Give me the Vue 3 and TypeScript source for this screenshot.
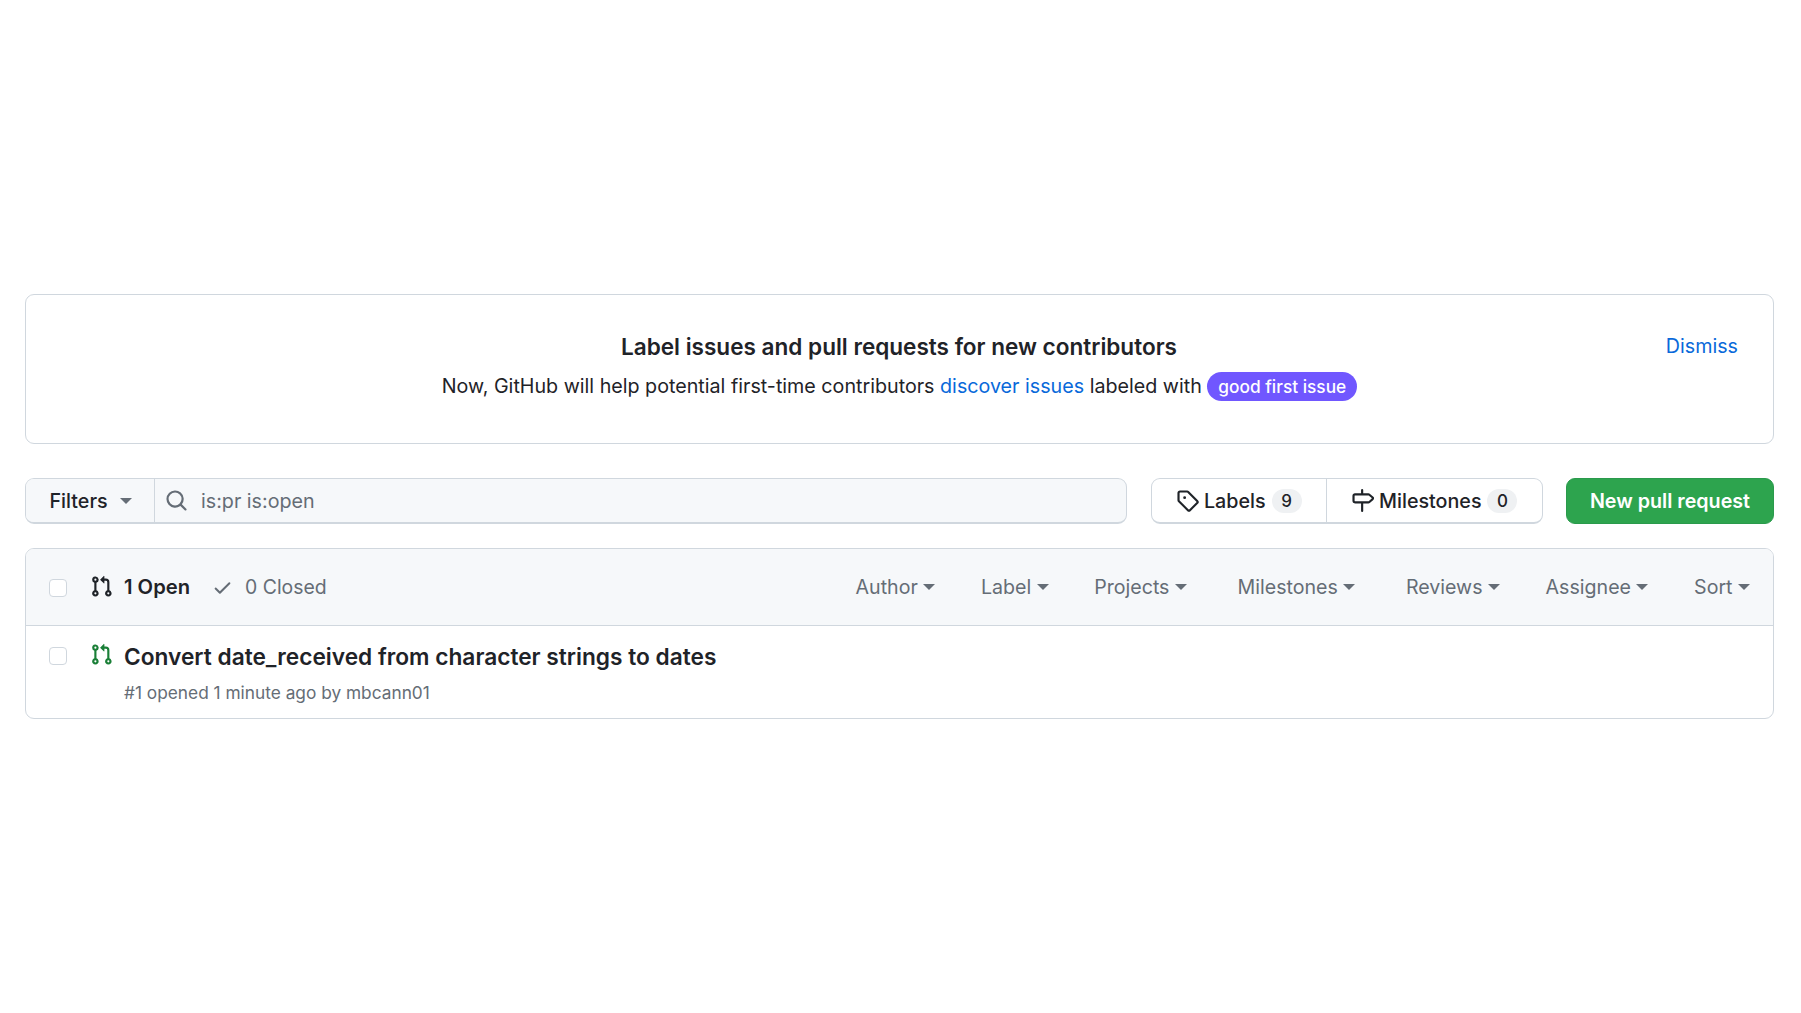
<script setup lang="ts">
const filters: string[] = ['Author', 'Label', 'Projects', 'Milestones', 'Reviews', 'Assignee', 'Sort']
const prPath =
  'M1.5 3.25a2.25 2.25 0 1 1 3 2.122v5.256a2.251 2.251 0 1 1-1.5 0V5.372A2.25 2.25 0 0 1 1.5 3.25Zm5.677-.177L9.573.677A.25.25 0 0 1 10 .854V2.5h1A2.5 2.5 0 0 1 13.5 5v5.628a2.251 2.251 0 1 1-1.5 0V5a1 1 0 0 0-1-1h-1v1.646a.25.25 0 0 1-.427.177L7.177 3.427a.25.25 0 0 1 0-.354ZM3.75 2.5a.75.75 0 1 0 0 1.5.75.75 0 0 0 0-1.5Zm0 9.5a.75.75 0 1 0 0 1.5.75.75 0 0 0 0-1.5Zm8.25.75a.75.75 0 1 0 1.5 0 .75.75 0 0 0-1.5 0Z'
</script>

<template>
  <div class="page">
    <section class="banner">
      <a class="dismiss">Dismiss</a>
      <h3 class="banner-title">Label issues and pull requests for new contributors</h3>
      <p class="banner-text">
        Now, GitHub will help potential first-time contributors
        <a class="link">discover issues</a> labeled with
        <span class="pill">good first issue</span>
      </p>
    </section>

    <div class="toolbar">
      <div class="search-group">
        <button class="filters">Filters<i class="caret caret-dark"></i></button>
        <div class="search">
          <svg class="icon search-icon" viewBox="0 0 16 16"><path d="M10.68 11.74a6 6 0 0 1-7.922-8.982 6 6 0 0 1 8.982 7.922l3.04 3.04a.749.749 0 0 1-.326 1.275.749.749 0 0 1-.734-.215ZM11.5 7a4.499 4.499 0 1 0-8.997 0A4.499 4.499 0 0 0 11.5 7Z" /></svg>
          <span>is:pr is:open</span>
        </div>
      </div>
      <div class="nav-group">
        <a class="nav-item nav-labels">
          <svg class="icon" viewBox="0 0 16 16"><path d="M1 7.775V2.75C1 1.784 1.784 1 2.75 1h5.025c.464 0 .91.184 1.238.513l6.25 6.25a1.75 1.75 0 0 1 0 2.474l-5.026 5.026a1.75 1.75 0 0 1-2.474 0l-6.25-6.25A1.752 1.752 0 0 1 1 7.775Zm1.5 0c0 .066.026.13.073.177l6.25 6.25a.25.25 0 0 0 .354 0l5.025-5.025a.25.25 0 0 0 0-.354l-6.25-6.25a.25.25 0 0 0-.177-.073H2.75a.25.25 0 0 0-.25.25ZM6 5a1 1 0 1 1 0 2 1 1 0 0 1 0-2Z" /></svg>
          <span>Labels</span><span class="counter">9</span>
        </a>
        <a class="nav-item">
          <svg class="icon" viewBox="0 0 16 16"><path d="M7.75 0a.75.75 0 0 1 .75.75V3h3.634c.414 0 .814.147 1.13.414l2.07 1.75a1.75 1.75 0 0 1 0 2.672l-2.07 1.75a1.75 1.75 0 0 1-1.13.414H8.5v5.25a.75.75 0 0 1-1.5 0V10H2.75A1.75 1.75 0 0 1 1 8.25v-3.5C1 3.784 1.784 3 2.75 3H7V.75A.75.75 0 0 1 7.75 0Zm4.384 8.5a.25.25 0 0 0 .161-.06l2.07-1.75a.248.248 0 0 0 0-.38l-2.07-1.75a.25.25 0 0 0-.161-.06H2.75a.25.25 0 0 0-.25.25v3.5c0 .138.112.25.25.25h9.384Z" /></svg>
          <span>Milestones</span><span class="counter">0</span>
        </a>
      </div>
      <button class="new-pr">New pull request</button>
    </div>

    <section class="list">
      <header class="list-head">
        <span class="checkbox head-check"></span>
        <div class="states">
          <a class="state state-open">
            <svg class="icon" viewBox="0 0 16 16"><path :d="prPath" /></svg>1 Open
          </a>
          <a class="state state-closed">
            <svg class="icon check" viewBox="0 0 16 16"><path d="M13.78 4.22a.75.75 0 0 1 0 1.06l-7.25 7.25a.75.75 0 0 1-1.06 0L2.22 9.28a.751.751 0 0 1 .018-1.042.751.751 0 0 1 1.042-.018L6 10.94l6.72-6.72a.75.75 0 0 1 1.06 0Z" /></svg>0 Closed
          </a>
        </div>
        <div class="menus">
          <span v-for="f in filters" :key="f" class="menu" :class="{ 'menu-wide': f === 'Milestones' }">{{ f }}<i class="caret"></i></span>
        </div>
      </header>
      <article class="row">
        <span class="checkbox row-check"></span>
        <svg class="icon pr-icon" viewBox="0 0 16 16"><path :d="prPath" /></svg>
        <div class="row-body">
          <a class="row-title">Convert date_received from character strings to dates</a>
          <div class="row-meta">#1 opened 1 minute ago by mbcann01</div>
        </div>
      </article>
    </section>
  </div>
</template>

<style>
html, body { margin: 0; background: #fff; }
</style>

<style scoped>
.page {
  box-sizing: border-box;
  width: 1801px;
  height: 1013px;
  padding: 294px 27px 0 25px;
  font-family: Inter, "Noto Sans", sans-serif;
  color: #1f2328;
  font-size: 19.7px;
  overflow: hidden;
}
.icon { width: 23px; height: 23px; fill: currentColor; flex: none; display: block; }
.banner {
  position: relative;
  box-sizing: border-box;
  height: 150px;
  border: 1.5px solid #d0d7de;
  border-radius: 9px;
  padding-top: 37px;
  text-align: center;
}
.dismiss { position: absolute; top: 37px; right: 35px; color: #0969da; line-height: 28px; }
.banner-title { margin: 0 0 0 -1px; font-size: 22.55px; line-height: 30px; font-weight: 600; }
.banner-text { margin: 9px 0 0; line-height: 30px; }
.link { color: #0969da; }
.pill {
  display: inline-block;
  padding: 0 11px;
  height: 29px;
  line-height: 29px;
  border-radius: 15px;
  background: #7057ff;
  color: #fff;
  font-size: 17.3px;
  font-weight: 500;
}
.toolbar { display: flex; margin-top: 34px; height: 46px; }
.search-group {
  flex: 1;
  display: flex;
  box-sizing: border-box;
  border: 1.5px solid #d0d7de;
  border-bottom-width: 2px;
  border-radius: 9px;
  background: #f6f8fa;
  overflow: hidden;
}
.filters {
  box-sizing: border-box;
  width: 129px;
  flex: none;
  border: 0;
  border-right: 1.5px solid #d0d7de;
  background: #f6f8fa;
  font: 500 19.7px Inter, sans-serif;
  color: #1f2328;
  padding: 0 0 0 23.5px;
  display: flex;
  align-items: center;
}
.filters .caret { margin-left: 12px; }
.search { flex: 1; display: flex; align-items: center; gap: 13px; padding-left: 10px; color: #656d76; }
.caret {
  display: inline-block;
  width: 0;
  height: 0;
  margin-left: 11px;
  border-left: 6.2px solid transparent;
  border-right: 6.2px solid transparent;
  border-top: 6px solid #656d76;
}
.nav-group {
  display: flex;
  box-sizing: border-box;
  width: 392px;
  margin-left: 24px;
  border: 1.5px solid #d0d7de;
  border-bottom-width: 2px;
  border-radius: 9px;
}
.nav-item {
  flex: 1;
  display: flex;
  align-items: center;
  justify-content: center;
  gap: 5px;
  font-weight: 500;
}
.nav-labels { flex: none; width: 173.5px; border-right: 1.5px solid #d0d7de; }
.counter {
  margin-left: 1px;
  min-width: 30px;
  height: 24px;
  line-height: 24px;
  text-align: center;
  border-radius: 12px;
  background: #eff1f3;
  font-size: 17px;
}
.new-pr {
  width: 208px;
  margin-left: 23px;
  border: 1px solid #2a9a4c;
  border-radius: 9px;
  background: #2da44e;
  color: #fff;
  font: 600 19.7px Inter, sans-serif;
}
.list {
  margin-top: 24px;
  box-sizing: border-box;
  height: 171px;
  border: 1.5px solid #d0d7de;
  border-radius: 9px;
  overflow: hidden;
}
.list-head {
  display: flex;
  align-items: center;
  height: 77px;
  box-sizing: border-box;
  padding: 0 23px;
  background: #f6f8fa;
  border-bottom: 1.5px solid #d0d7de;
}
.checkbox {
  box-sizing: border-box;
  flex: none;
  width: 18px;
  height: 18px;
  border: 1.5px solid #d0d7de;
  border-radius: 4px;
  background: #fff;
}
.head-check { margin-top: 2px; }
.states { display: flex; align-items: center; margin-left: 23px; gap: 22px; }
.state { display: flex; align-items: center; }
.state-open { font-size: 20.2px; font-weight: 600; gap: 11px; line-height: 24px; margin-top: -1px; }
.state-closed { font-size: 19.4px; color: #656d76; gap: 12px; }
.check { width: 21px; height: 21px; }
.menus { margin-left: auto; display: flex; align-items: center; gap: 45.6px; color: #656d76; font-size: 19.6px; }
.menu { display: flex; align-items: center; }
.menu .caret { margin-left: 5.5px; }
.menu-wide { margin: 0 5px; }
.row { display: flex; padding: 0 23px; }
.row-check { margin-top: 21px; }
.pr-icon { margin: 17px 0 0 23px; color: #1a7f37; }
.row-body { margin-left: 11px; padding-top: 16px; }
.row-title { display: block; font-size: 22.7px; font-weight: 600; line-height: 30px; }
.row-meta { margin-top: 9px; font-size: 17.3px; line-height: 24px; color: #656d76; }
</style>
